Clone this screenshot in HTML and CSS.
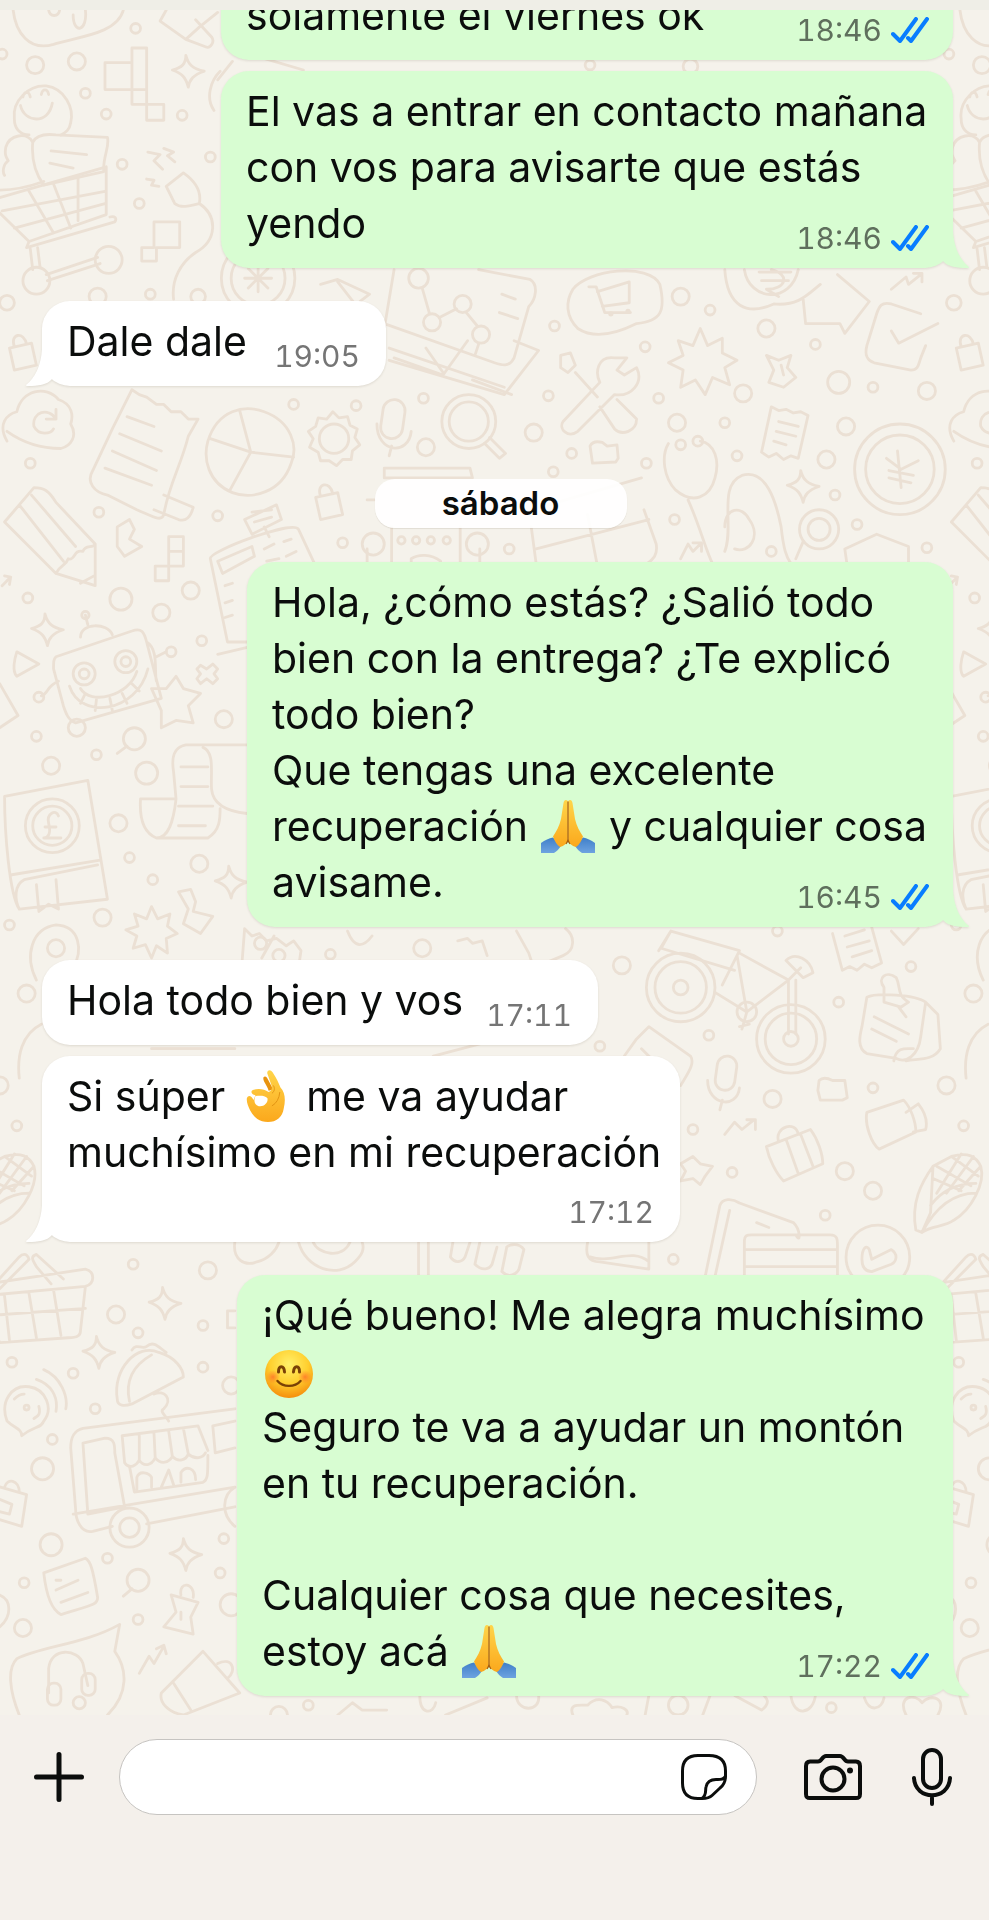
FILE: index.html
```html
<!DOCTYPE html>
<html lang="es">
<head>
<meta charset="utf-8">
<meta name="viewport" content="width=device-width, initial-scale=1">
<title>Chat</title>
<link rel="stylesheet" href="styles.css">
</head>
<body>
<svg class="defs" width="0" height="0" aria-hidden="true">
  <defs>
    <linearGradient id="skin" x1="0" y1="0" x2="0" y2="1"><stop offset="0" stop-color="#ffd54a"/><stop offset="1" stop-color="#fba81c"/></linearGradient>
    <linearGradient id="sleeve" x1="0" y1="0" x2="0" y2="1"><stop offset="0" stop-color="#3f7fc9"/><stop offset="1" stop-color="#6ea3e0"/></linearGradient>
    <radialGradient id="face" cx=".5" cy=".3" r=".72"><stop offset="0" stop-color="#fff06a"/><stop offset=".55" stop-color="#ffcf2e"/><stop offset="1" stop-color="#f58a0b"/></radialGradient>
    <radialGradient id="blush"><stop offset="0" stop-color="#ff6a2a" stop-opacity=".75"/><stop offset="1" stop-color="#ff7a2a" stop-opacity="0"/></radialGradient>
    <symbol id="pray" viewBox="0 0 54 54">
      <path d="M0 44C4 41 8 39.500 12 38.500L20 47C18 50 16 52 13 54H0ZM54 44C50 41 46 39.500 42 38.500L34 47C36 50 38 52 41 54H54Z" fill="url(#sleeve)"/>
      <path d="M26.800 2C25 0 23 1 22.500 4L20 20C18.500 27 15 33 12 37.500C13.500 42 16 46 19 48C23 47 26.800 44 26.800 40Z" fill="url(#skin)"/>
      <path d="M27.200 2C29 0 31 1 31.500 4L34 20C35.500 27 39 33 42 37.500C40.500 42 38 46 35 48C31 47 27.200 44 27.200 40Z" fill="url(#skin)"/>
      <path d="M27 2.500V41M25 45C26.500 43 27 42 27 40C27 42 27.500 43 29 45" fill="none" stroke="#a85d0c" stroke-width="1.200"/>
    </symbol>
    <symbol id="okhand" viewBox="36 26 124 164">
      <path d="M90 52C94 46 100 48 104 58L120 88L106 92C102 76 88 64 90 52Z" fill="#e8930f"/>
      <path fill-rule="evenodd" d="M102 40C100 28 112 26 118 36C130 54 136 68 142 82C156 96 158 120 152 145C148 172 130 187 104 187C78 187 62 174 50 152C44 140 38 126 40 114C44 104 54 106 60 120L66 106C54 104 50 94 58 90C74 84 92 86 106 96C116 92 118 84 114 74ZM66 108C60 120 62 136 76 139C94 142 106 126 102 114C94 106 80 106 66 108Z" fill="url(#skin)"/>
      <path d="M120 76C126 84 124 94 116 100M140 96C138 116 130 130 116 138" fill="none" stroke="#e29312" stroke-width="3"/>
    </symbol>
    <symbol id="smile" viewBox="0 0 48 48">
      <circle cx="24" cy="24" r="24" fill="url(#face)"/>
      <circle cx="8" cy="27" r="7" fill="url(#blush)"/><circle cx="40" cy="27" r="7" fill="url(#blush)"/>
      <path d="M13.500 22C13.500 15 19 15 19.500 22M28.500 22C29 15 34.500 15 34.500 22" fill="none" stroke="#7a4106" stroke-width="3" stroke-linecap="round"/>
      <path d="M12.500 31C18 37.500 30 37.500 35.500 31" fill="none" stroke="#7a4106" stroke-width="2.400" stroke-linecap="round"/>
    </symbol>
    <symbol id="ticks" viewBox="0 0 38 26">
      <path d="M2 17L9 24L25 2M17 21L20 24L36 2" fill="none" stroke="#087dff" stroke-width="4" stroke-linecap="round" stroke-linejoin="round"/>
    </symbol>
    <symbol id="tail" viewBox="0 0 26 38">
      <path d="M0 0H10C11 17 17 29 26 36C26 37 25 37 24 37C14 37 5 36 0 30Z"/>
    </symbol>
  </defs>
</svg>

<div class="screen">
  <div class="topbar"></div>
  <main class="chat">
    <svg class="wallpaper" viewBox="0 8 808 1392" preserveAspectRatio="xMidYMin slice" aria-hidden="true">
      <g id="tile">
        <g id="dots">
          <circle cx="29" cy="53" r="7"/><circle cx="63" cy="50" r="7"/><circle cx="111" cy="23" r="4"/><circle cx="2" cy="44" r="4"/><circle cx="70" cy="76" r="4"/><circle cx="87" cy="93" r="4"/><circle cx="149" cy="94" r="4"/><circle cx="172" cy="128" r="4"/><circle cx="100" cy="134" r="4"/><circle cx="114" cy="166" r="4"/><circle cx="6" cy="247" r="6"/><circle cx="80" cy="242" r="7"/><circle cx="123" cy="240" r="4"/><circle cx="162" cy="242" r="6"/>
          <circle cx="556" cy="242" r="7"/><circle cx="580" cy="253" r="4"/><circle cx="453" cy="266" r="4"/><circle cx="626" cy="268" r="7"/><circle cx="527" cy="283" r="4"/><circle cx="666" cy="281" r="4"/><circle cx="685" cy="312" r="9"/><circle cx="607" cy="321" r="7"/><circle cx="713" cy="316" r="4"/><circle cx="757" cy="319" r="7"/><circle cx="448" cy="323" r="4"/><circle cx="482" cy="53" r="4"/><circle cx="564" cy="54" r="6"/>
          <circle cx="25" cy="378" r="4"/><circle cx="240" cy="330" r="4"/><circle cx="291" cy="331" r="4"/><circle cx="346" cy="325" r="4"/><circle cx="348" cy="365" r="7"/><circle cx="436" cy="353" r="7"/><circle cx="538" cy="325" r="4"/><circle cx="553" cy="345" r="7"/><circle cx="592" cy="345" r="4"/><circle cx="691" cy="348" r="7"/><circle cx="467" cy="370" r="4"/><circle cx="452" cy="385" r="4"/><circle cx="528" cy="378" r="4"/><circle cx="602" cy="372" r="4"/><circle cx="675" cy="375" r="7"/><circle cx="682" cy="404" r="4"/><circle cx="81" cy="418" r="4"/><circle cx="178" cy="421" r="4"/><circle cx="280" cy="443" r="4"/><circle cx="416" cy="448" r="4"/><circle cx="551" cy="424" r="4"/><circle cx="630" cy="450" r="4"/><circle cx="757" cy="447" r="4"/><circle cx="700" cy="428" r="4"/>
          <circle cx="99" cy="489" r="9"/><circle cx="156" cy="482" r="7"/><circle cx="132" cy="500" r="7"/><circle cx="23" cy="488" r="4"/><circle cx="165" cy="523" r="4"/><circle cx="183" cy="587" r="7"/><circle cx="30" cy="601" r="4"/><circle cx="42" cy="625" r="7"/><circle cx="79" cy="616" r="4"/><circle cx="120" cy="631" r="9"/><circle cx="97" cy="672" r="7"/><circle cx="106" cy="700" r="4"/><circle cx="163" cy="705" r="7"/><circle cx="125" cy="718" r="4"/><circle cx="84" cy="749" r="7"/><circle cx="8" cy="755" r="4"/>
          <circle cx="345" cy="774" r="7"/><circle cx="270" cy="779" r="4"/><circle cx="508" cy="788" r="7"/><circle cx="22" cy="811" r="7"/><circle cx="635" cy="760" r="4"/><circle cx="744" cy="789" r="4"/><circle cx="685" cy="818" r="4"/><circle cx="579" cy="845" r="4"/><circle cx="490" cy="854" r="4"/><circle cx="713" cy="888" r="4"/><circle cx="0" cy="886" r="7"/><circle cx="631" cy="897" r="7"/><circle cx="566" cy="922" r="4"/><circle cx="14" cy="919" r="4"/><circle cx="598" cy="957" r="4"/><circle cx="690" cy="956" r="7"/><circle cx="713" cy="972" r="7"/><circle cx="674" cy="992" r="4"/><circle cx="550" cy="1028" r="4"/><circle cx="109" cy="1032" r="4"/><circle cx="170" cy="1037" r="7"/><circle cx="95" cy="1073" r="7"/><circle cx="113" cy="1088" r="4"/><circle cx="166" cy="1082" r="4"/><circle cx="10" cy="1112" r="4"/><circle cx="60" cy="1121" r="4"/><circle cx="166" cy="1116" r="4"/><circle cx="78" cy="1150" r="4"/><circle cx="189" cy="1131" r="7"/>
          <circle cx="43" cy="1175" r="4"/><circle cx="35" cy="1199" r="9"/><circle cx="42" cy="1261" r="9"/><circle cx="183" cy="1256" r="4"/><circle cx="88" cy="1272" r="4"/><circle cx="20" cy="1292" r="4"/><circle cx="180" cy="1284" r="4"/><circle cx="113" cy="1322" r="4"/><circle cx="19" cy="1329" r="7"/><circle cx="189" cy="1310" r="9"/><circle cx="252" cy="1392" r="4"/><circle cx="679" cy="1394" r="4"/>
        </g>
        <!-- mitten, brush, steps, stars -->
        <path d="M11 8C13 26 24 42 44 36C62 30 96 28 101 8M40 8C41 14 48 14 49 8M60 12C60 28 72 26 70 8"/>
        <path d="M136 8L131 17L152 32L163 22L178 10M152 32L168 38C172 40 176 34 173 30L160 16"/>
        <path d="M86 51H108V39H120V51V85H134V98H120V85H108V73H86ZM108 51V73H120"/>
        <path id="spark" d="M152 45C154 53 158 56 167 58C158 61 155 65 154 71C152 63 149 60 141 57C149 55 152 52 152 45Z"/>
        <!-- smiley, bag and shopping cart -->
        <path d="M12 97C10 82 24 69 38 70C53 72 61 88 58 100C57 106 54 108 50 110M12 97C12 104 16 110 24 110M17 86C20 100 40 102 43 84M19 79C20 74 24 74 25 79M34 77C35 72 39 72 40 77"/>
        <path d="M27 116C22 107 8 110 5 120C4 126 5 128 7 131C3 134 2 140 4 143M27 116C30 110 38 109 46 110L88 112C90 120 84 128 85 140L36 151C28 140 26 128 27 116ZM42 123L71 126M41 133L60 137M0 155C10 155 22 153 36 148"/>
        <path d="M-10 164L87 136V175L24 197ZM24 156L44 190M44 150L58 186M64 143V180M2 172L86 156M12 186L86 166M24 197L22 202L94 181C96 178 94 176 90 177M25 203L27 220M31 202L33 218M38 224L80 210M39 229L82 215"/>
        <circle cx="30" cy="229" r="11"/><circle cx="89" cy="212" r="11"/>
        <!-- plug and blocks -->
        <path d="M136 152L150 141C160 148 165 156 163 166C155 168 148 170 143 166ZM121 124L131 126L126 131L133 138M134 121L142 124L137 127L143 132M120 146L126 147L124 151L130 152M163 166C178 176 178 196 160 206C148 214 140 228 142 244"/>
        <path d="M126 181H147V202H128V213H116V202H126Z"/>
        <!-- flower medal -->
        <circle cx="211" cy="227" r="30"/><circle cx="211" cy="227" r="22"/><path d="M211 216V238M200 227H222M203 219L219 235M219 219L203 235M190 40L248 57M178 65L190 50M175 90C168 80 172 66 180 58"/>
        <!-- laptop with graph -->
        <path d="M262 232L276 228L302 240L294 246M276 230L290 248M322 220L314 268M391 220L433 228C440 232 438 244 432 250L420 292C416 300 410 298 404 296L314 264M322 292L362 306L382 278M440 286L412 322L318 294M440 286L420 278M318 284L412 316M410 240L421 244M408 255L423 260M348 284L362 304M345 235L351 256M359 259L373 252M381 255L390 266M391 281L388 290"/>
        <circle cx="342" cy="227" r="8"/><circle cx="378" cy="248" r="7"/><circle cx="353" cy="263" r="7"/><circle cx="393" cy="273" r="7"/>
        <!-- cart tag -->
        <path d="M468 236C480 220 530 214 539 232C544 254 540 262 520 264C500 274 484 276 472 268C462 258 462 246 468 236ZM481 234H487L494 255H515M488 238L514 230V247L492 250"/><circle cx="499" cy="256" r="1"/><circle cx="513" cy="254" r="1"/>
        <!-- coin, arrow, check, chart -->
        <path d="M592 220C594 250 610 258 632 248C652 250 660 240 670 232M608 220C612 246 646 248 652 220M620 222H646M622 229H644M630 220C646 224 642 236 626 236L636 242M684 224L710 246L690 272L686 264H658L656 244M728 236L740 226L742 232L752 224M746 223H753V230"/>
        <path d="M752 256L728 248C720 246 718 250 716 256L708 282C706 290 708 294 714 296L744 302C750 302 750 298 752 292L756 282M728 270L734 280L766 264"/>
        <!-- starbursts and tools -->
        <path d="M572 268L578 282L590 276L590 288L602 294L592 300L596 314L582 308L576 322L568 310L556 316L558 302L546 296L558 290L554 278L566 282Z"/>
        <path d="M626 290L636 294L646 290L643 300L650 308L640 316L628 312L632 302ZM638 298L640 306M458 290L466 288L470 298L464 304L458 300ZM470 304L488 324M502 292C488 290 486 304 490 312L460 344C456 350 464 358 472 352L502 322C516 324 526 312 520 300L510 306L504 302L512 292ZM490 332L502 350C508 356 520 352 520 342L504 326"/>
        <path id="lock" d="M8 284L26 280L30 298L12 302ZM12 283C8 272 20 270 22 281"/>
        <!-- cloud, receipt, pie, gear -->
        <path d="M6 360C-2 346 6 338 14 336C18 318 38 314 48 326C60 330 60 340 58 346C64 356 58 364 50 366C34 366 20 362 6 352M46 334V342H38M46 342C40 332 26 336 28 348C32 356 42 354 44 350"/>
        <path d="M108 318L114 322L120 324L128 330L134 330L140 336L148 336L154 342L162 342L154 356C148 380 138 396 134 420C132 426 126 422 112 416L88 404C78 402 70 394 76 384L92 350ZM134 404L158 414C156 422 152 426 146 424L126 416M104 340L126 348M98 354L132 368M92 368L128 384M86 382L124 396"/>
        <path d="M170 360C178 334 200 330 216 336C238 344 244 364 238 378C230 402 206 408 190 402C170 394 166 374 170 360ZM205 369L196 335M205 369L172 358M205 369L240 373M205 369L188 400"/>
        <path d="M272 336L277 341L284 340L286 347L292 350L290 357L294 363L288 368L287 375L280 375L275 380L269 376L262 376L260 369L253 365L256 358L252 352L258 348L260 341L267 342Z"/><circle cx="273" cy="358" r="12"/>
        <!-- mic, lens, folder -->
        <rect x="312" y="326" width="18" height="32" rx="9" transform="rotate(8 321 342)"/><path d="M308 346C308 370 334 372 336 352M320 364L318 372"/>
        <circle cx="383" cy="344" r="22"/><circle cx="383" cy="344" r="16"/><path d="M396 362L408 374L413 370L400 357M386 310L418 322M482 364C484 360 488 360 492 361L496 364L504 363L505 374L503 377L484 378Z"/>
        <!-- stethoscope, bill, yen coin -->
        <path d="M546 362C540 372 542 390 552 400C566 412 580 406 584 390C588 376 584 362 572 360M562 408C572 430 576 448 582 460M592 450C600 430 586 396 606 388C626 382 634 410 638 430C640 448 642 454 646 460M592 430C592 414 606 412 612 424C622 438 612 452 600 448"/><circle cx="556" cy="363" r="4"/><circle cx="570" cy="360" r="4"/>
        <path d="M630 332L636 335L642 334L648 337L654 336L660 339L652 374L646 372L640 375L634 370L628 373L622 369ZM636 344L652 348M634 352L650 356M632 360L642 363"/>
        <circle cx="735" cy="383" r="37"/><circle cx="735" cy="383" r="28"/><path d="M733 368L736 398M736 383L750 376M736 383L724 374M726 384L746 388M726 390L744 394"/>
        <use href="#spark" x="502" y="339"/>
        <circle cx="669" cy="432" r="16"/><circle cx="669" cy="432" r="9"/><path d="M656 442L650 456M692 462L690 448L716 436L742 446V462M556 456L562 444L566 450L572 444M566 443H573V450"/>
        <!-- pencil and blocks -->
        <path d="M4 426L28 398C36 398 40 400 46 410L78 444V478L46 468ZM16 412L52 458M26 404L62 446M46 468C50 460 54 462 56 456C62 458 60 448 68 450C70 444 76 448 78 444M66 476L77 470M2 478L9 471L4 470M9 471L8 477"/>
        <path d="M96 430L106 424L110 432L106 440L116 446L102 454L96 446ZM138 438H150V462H138ZM138 450H150M138 462V474H127V462Z"/>
        <use href="#lock" x="250" y="122"/>
        <!-- till -->
        <path d="M200 424L226 412L230 424L206 436ZM206 418L222 416M208 426L222 422M216 430L220 438M172 456C170 450 240 424 244 432L258 462M172 456L186 524H204M178 458L206 446L208 454L182 468ZM216 448L224 444M232 442L238 440M218 458L228 456M234 454L242 450M184 478L190 476M184 492L190 490M184 504L190 502M178 534L204 528"/>
        <!-- robot keypad and grid -->
        <path d="M314 382H384L386 390H314ZM300 408H306M320 430V462M376 430V462M300 448V462M392 448V462M336 462V456C342 452 352 452 360 458V462M434 430L438 460M480 420L488 462M526 416L536 444C538 456 530 458 526 462M434 416L524 390M438 448L530 424"/>
        <circle cx="305" cy="444" r="9"/><circle cx="390" cy="444" r="9"/><circle cx="328" cy="441" r="3"/><circle cx="340" cy="441" r="3"/><circle cx="352" cy="441" r="3"/><circle cx="365" cy="441" r="3"/>
        <!-- spark, play, cross, robot -->
        <use href="#spark" x="-115" y="456"/>
        <path d="M14 532L32 542L14 552C10 548 12 538 14 532ZM164 543L169 546L174 542L178 546L175 550L178 554L174 558L169 554L164 558L161 554L164 550L161 546Z"/>
        <path d="M66 520C66 508 88 508 92 518M72 510L70 502M46 536L108 515C116 512 118 516 120 524L132 570L62 590C56 588 54 582 52 576L44 546C44 540 44 538 46 536ZM120 524C130 530 126 548 128 556M128 536L136 532M48 556C38 560 40 566 34 568"/>
        <circle cx="70" cy="502" r="3"/><circle cx="140" cy="532" r="4"/><circle cx="32" cy="569" r="4"/><circle cx="69" cy="550" r="9"/><circle cx="103" cy="540" r="9"/><circle cx="69" cy="550" r="4"/><circle cx="103" cy="540" r="4"/>
        <path d="M57 560C66 588 112 582 121 546M66 562C74 576 106 568 112 548M66 574L70 566M78 580L79 571M92 580L90 570M104 574L100 566M114 564L108 558"/>
        <path d="M124 562L136 562L144 552L150 562L164 566L154 576L158 590L144 588L132 594L132 580ZM0 558L15 584L0 594"/>
        <circle cx="63" cy="594" r="7"/><circle cx="110" cy="603" r="9"/><path d="M104 609L96 615"/>
        <!-- scroll -->
        <path d="M202 608H152C142 610 140 618 142 630L144 652M166 610C176 614 172 632 173 644C174 656 184 662 202 664M144 652C142 670 138 684 128 684C118 680 114 668 115 652H144M128 684H170C180 678 180 668 180 660M148 626H170M148 642H170M146 658H174M146 674H168"/>
        <!-- banknote book, flags -->
        <path d="M4 650L72 637L88 734L16 742C8 730 4 680 4 650ZM10 714L82 702M16 742C12 734 12 722 20 718L80 706M30 722L32 744L40 738L48 742L46 718"/><circle cx="43" cy="674" r="22"/><circle cx="43" cy="674" r="16"/><path d="M48 666C46 660 38 664 40 672C42 680 40 684 36 684H50M37 675H46"/>
        <use href="#spark" x="35" y="662"/>
        <path d="M146 728L156 726L160 736L158 744L174 748L164 762L150 754L154 742Z"/>
        <path id="burst" d="M124 740L129 750L139 746L137 756L145 762L136 766L137 778L128 772L124 782L119 771L109 774L112 764L103 759L113 756L110 746L120 750Z"/>
        <path d="M30 800C20 780 26 758 46 755C66 756 68 776 60 790"/><circle cx="46" cy="774" r="7"/>
        <path d="M200 758L206 764L212 762L218 768L226 766L234 772L240 768L246 776L244 790M200 758L198 784M214 782L224 764M284 760C290 776 298 772 304 764M374 768L382 766L386 770L394 768L398 780M422 760L432 778L436 790L460 780C470 776 470 764 462 758"/><circle cx="213" cy="770" r="5"/><circle cx="228" cy="780" r="5"/>
        <!-- bicycle -->
        <circle cx="556" cy="806" r="28"/><circle cx="556" cy="806" r="21"/><circle cx="556" cy="806" r="6"/><circle cx="646" cy="848" r="28"/><circle cx="646" cy="848" r="21"/><circle cx="646" cy="848" r="6"/>
        <path d="M538 776L548 760L604 776L590 804M548 760L540 774L600 792M602 780L610 826L644 800L604 778M584 810L610 826L606 840M644 800V844M650 800V844M644 800L654 790M642 784C650 776 662 784 664 794L656 798ZM604 838L612 836"/><circle cx="610" cy="826" r="8"/>
        <!-- receipt, clip note -->
        <path d="M680 762L688 792L694 789L700 792L706 787L712 790L720 786L712 757M690 764L706 759M692 773L710 768M696 781L712 776M728 760L738 771L750 758"/>
        <path d="M708 814C716 810 748 812 756 818L752 846C750 862 740 868 732 864L708 860C700 856 702 846 704 838ZM756 818L766 828L768 856C762 866 750 864 740 866M714 830L742 844M712 840L732 850M730 866C732 854 740 856 746 856M722 806C716 798 724 792 732 798C736 806 732 812 742 818L736 822L722 818ZM734 822L740 830"/>
        <!-- mic, folder, camera, bag, star -->
        <path d="M520 848L530 838L564 862C568 868 562 876 556 886M520 848L510 862M524 856L534 866M124 856H192M16 880C14 862 18 844 34 836M354 862L392 852"/>
        <rect x="585" y="862" width="16" height="28" rx="8" transform="rotate(8 593 876)"/><path d="M578 882C578 902 602 906 604 888M590 898L588 906"/>
        <path d="M669 882C672 879 676 880 680 882L690 882L692 896L688 898H670L668 890ZM708 908L738 898C744 904 748 916 748 924L718 938C712 934 706 918 708 908ZM740 908L750 901C754 906 758 914 756 922L746 924M592 926L600 916L606 922L616 914M610 914H617V922"/>
        <path d="M626 936L662 922C668 930 672 942 672 950L640 964C634 958 628 946 626 936ZM636 932C632 920 650 914 652 926M642 930L652 958M654 926L664 952M566 944L572 950L582 952L576 960L572 967L566 962L556 964L560 956L556 950Z"/>
        <!-- corn -->
        <path d="M-25 1004C-29 982 -21 966 -11 952L4 944C18 940 24 944 28 952C32 966 20 988 6 996C-2 1002 -12 1000 -20 1006ZM-11 952L-13 990L-20 1006M-20 1006C-8 984 6 974 24 974M-13 984C-4 972 8 966 24 966M-11 962L12 972M-8 952L20 968M4 944L26 960M-8 974L12 942M0 974L22 944M10 972L28 952"/>
        <!-- phone and card, check, cup -->
        <path d="M576 1042L588 984C590 978 598 978 604 982L648 998C654 1004 654 1016 650 1008M584 1042L596 988M618 998L628 1002M608 1042V1014C608 1008 610 1008 614 1008H678C684 1008 684 1012 684 1016V1042M608 1020H684M608 1034H684M480 1014C478 1024 480 1030 490 1030L530 1036V1014M482 1026C500 1032 516 1018 530 1030"/>
        <circle cx="717" cy="1026" r="26"/><path d="M704 1028C704 1018 708 1016 710 1020L712 1028L728 1020C734 1024 732 1030 728 1032L712 1038C706 1038 704 1034 704 1028Z"/>
        <path d="M192 1014C190 1028 200 1034 210 1030C220 1028 226 1020 228 1014M244 1014C250 1036 276 1044 290 1030C296 1024 298 1020 296 1014M256 1014C260 1024 280 1028 286 1014M342 1014V1042M350 1014V1042M370 1014L368 1026C372 1032 378 1030 380 1026L384 1014M392 1014L388 1032C394 1038 400 1036 402 1032L406 1018M414 1018L410 1038C416 1044 422 1040 424 1036L428 1020C424 1014 416 1016 414 1018Z"/>
        <!-- basket -->
        <path d="M-10 1048L70 1036C78 1038 78 1048 70 1050L66 1086C66 1090 64 1092 56 1092L0 1096L-16 1058L70 1050M4 1058L8 1094M24 1056L30 1092M44 1053L50 1090M-10 1074L70 1068M0 1052L24 1028C22 1022 18 1024 16 1026L-4 1048M52 1044L30 1024C24 1026 28 1030 30 1034L42 1048"/>
        <use href="#spark" x="-19" y="1006"/><use href="#spark" x="-73" y="1046"/>
        <!-- taco -->
        <path d="M96 1142C92 1118 112 1096 130 1104C144 1108 150 1118 150 1124L108 1146C102 1148 96 1148 96 1142ZM106 1144C102 1126 110 1114 124 1106M108 1102C112 1096 116 1102 120 1099C126 1094 130 1100 136 1104M126 1138C134 1134 142 1142 134 1150C130 1152 136 1156 138 1160M192 1070H186V1084H192"/>
        <!-- voice wave -->
        <circle cx="22" cy="1149" r="2"/><path d="M6 1160C0 1144 10 1130 24 1132C38 1134 44 1150 36 1160C34 1166 28 1164 18 1172C18 1166 12 1166 6 1160ZM12 1142C16 1138 18 1138 20 1138M32 1148C34 1156 30 1156 28 1158M36 1118C50 1124 56 1140 54 1150M30 1126C42 1130 48 1140 46 1152"/>
        <!-- food truck -->
        <path d="M192 1150L68 1166C60 1168 58 1174 58 1182L62 1232C62 1240 66 1252 76 1250L92 1246M120 1244L192 1230M68 1178L86 1174C94 1174 94 1180 94 1186L102 1230L72 1236ZM100 1172L162 1164L170 1184M106 1197L110 1218L166 1210C170 1208 170 1204 170 1188M100 1172L102 1194C106 1200 112 1196 114 1192C118 1198 124 1196 127 1190C132 1196 138 1194 141 1189C146 1194 152 1192 154 1187C160 1192 166 1190 168 1186M114 1172V1192M126 1170L127 1190M138 1168L141 1189M150 1166L154 1187M192 1160L174 1164L176 1186L192 1182M60 1236L192 1214M112 1216V1206C114 1200 122 1202 124 1206V1214M132 1214L138 1200L142 1212M148 1210V1202C152 1196 160 1198 160 1208"/>
        <circle cx="106" cy="1247" r="16"/><circle cx="106" cy="1247" r="8"/><path d="M192 1214C182 1220 180 1236 192 1246"/>
        <path d="M-6 1212L22 1220L18 1246L-8 1238M4 1214C6 1206 16 1208 16 1218M0 1224L10 1228L8 1236L0 1234"/>
        <use href="#spark" x="-2" y="1211"/>
        <path d="M36 1284L70 1272C74 1274 76 1280 80 1304C80 1310 76 1310 50 1318C42 1314 38 1302 36 1284ZM46 1290H50M46 1298L64 1290M50 1308L72 1300"/>
        <circle cx="113" cy="1290" r="9"/><path d="M108 1297L101 1303M140 1302L162 1308L156 1320L158 1334L134 1328L144 1316ZM148 1302C146 1290 160 1292 158 1304M148 1316V1322M0 1302C10 1306 10 1320 0 1328"/>
        <!-- headset bubble, megaphone -->
        <path d="M16 1400C8 1380 6 1362 14 1354C34 1344 70 1342 98 1326L94 1348C104 1362 106 1382 88 1400M40 1382V1362C42 1344 64 1346 68 1358L72 1376"/><rect x="39" y="1374" width="11" height="18" rx="5"/><rect x="67" y="1366" width="11" height="18" rx="5"/><circle cx="65" cy="1390" r="5"/>
        <path d="M132 1382L166 1348L196 1382L150 1400C138 1398 130 1390 132 1382ZM142 1374L156 1396M178 1358C190 1352 194 1364 186 1370M114 1366L122 1352L126 1358L134 1344M128 1346L134 1343L136 1350"/>
        <path d="M276 1400L288 1390L296 1396H316M343 1384C343 1400 354 1400 356 1390M364 1400L398 1386M422 1384C422 1398 442 1398 440 1384M468 1400C464 1390 474 1392 480 1392C488 1384 496 1388 500 1394C508 1392 514 1396 512 1400M530 1384L527 1400M580 1384L574 1400M600 1384L622 1396C630 1390 626 1386 624 1384M646 1384C648 1402 664 1400 666 1384M706 1386C710 1398 720 1396 722 1386M740 1400C732 1384 748 1382 753 1390C760 1382 774 1386 766 1400"/><circle cx="554" cy="1392" r="8"/><circle cx="228" cy="1400" r="7"/>
      </g>
      <use href="#tile" x="773"/>
    </svg>

    <div class="row out joined">
      <div class="bubble w-wide">
        <p class="text">solamente el viernes ok</p>
        <span class="meta"><time>18:46</time><svg class="ticks" role="img" aria-label="Leído"><use href="#ticks"/></svg></span>
      </div>
    </div>
    <div class="row out joined">
      <div class="bubble w-wide">
        <p class="text">El vas a entrar en contacto mañana<br>con vos para avisarte que estás<br>yendo</p>
        <span class="meta"><time>18:46</time><svg class="ticks" role="img" aria-label="Leído"><use href="#ticks"/></svg></span>
        <svg class="tail" aria-hidden="true"><use href="#tail"/></svg>
      </div>
    </div>
    <div class="row in">
      <div class="bubble w-short">
        <p class="text">Dale dale</p>
        <span class="meta"><time>19:05</time></span>
        <svg class="tail" aria-hidden="true"><use href="#tail"/></svg>
      </div>
    </div>
    <div class="day"><span>sábado</span></div>
    <div class="row out">
      <div class="bubble w-large">
        <p class="text">Hola, ¿cómo estás? ¿Salió todo<br>bien con la entrega? ¿Te explicó<br>todo bien?<br>Que tengas una excelente<br>recuperación <svg class="emoji" role="img" aria-label="🙏"><use href="#pray"/></svg> y cualquier cosa<br>avisame.</p>
        <span class="meta"><time>16:45</time><svg class="ticks" role="img" aria-label="Leído"><use href="#ticks"/></svg></span>
        <svg class="tail" aria-hidden="true"><use href="#tail"/></svg>
      </div>
    </div>
    <div class="row in">
      <div class="bubble w-medium">
        <p class="text">Hola todo bien y vos</p>
        <span class="meta"><time>17:11</time></span>
      </div>
    </div>
    <div class="row in joined">
      <div class="bubble stacked w-text">
        <p class="text">Si súper <svg class="emoji" role="img" aria-label="👌"><use href="#okhand"/></svg> me va ayudar<br>muchísimo en mi recuperación</p>
        <span class="meta"><time>17:12</time></span>
        <svg class="tail" aria-hidden="true"><use href="#tail"/></svg>
      </div>
    </div>
    <div class="row out">
      <div class="bubble w-full">
        <p class="text">¡Qué bueno! Me alegra muchísimo<br><svg class="emoji round" role="img" aria-label="😊"><use href="#smile"/></svg><br>Seguro te va a ayudar un montón<br>en tu recuperación.<br><br>Cualquier cosa que necesites,<br>estoy acá <svg class="emoji" role="img" aria-label="🙏"><use href="#pray"/></svg></p>
        <span class="meta"><time>17:22</time><svg class="ticks" role="img" aria-label="Leído"><use href="#ticks"/></svg></span>
        <svg class="tail" aria-hidden="true"><use href="#tail"/></svg>
      </div>
    </div>
  </main>

  <form class="composer">
    <button type="button" class="icon" aria-label="Adjuntar"><svg width="50" height="50" viewBox="0 0 50 50"><path d="M25 2.500V47.500M2.500 25H47.500" stroke-width="5"/></svg></button>
    <div class="field">
      <input type="text" aria-label="Mensaje">
      <button type="button" class="icon" aria-label="Stickers"><svg width="46" height="46" viewBox="0 0 46 46"><path d="M21 44.500H17C6 44.500 1.500 39 1.500 29V17C1.500 6 7 1.500 17 1.500H28C39 1.500 44.500 7 44.500 17V22C44.500 28 43 31 39 34L31 41.500C29 43.500 27 44.500 21 44.500C26 41 24 37 25 33C26 28 30 25.500 35 25.500C39 25.500 43 26 44.500 22" stroke-width="3"/></svg></button>
    </div>
    <button type="button" class="icon" aria-label="Cámara"><svg width="58" height="46" viewBox="0 0 58 46"><path d="M6 7.500H14C18 7.500 18 2 22 2H36C40 2 40 7.500 44 7.500H52C55 7.500 56 9 56 12V40C56 43 55 44 52 44H6C3 44 2 43 2 40V12C2 9 3 7.500 6 7.500Z" stroke-width="4"/><circle cx="29" cy="25" r="11.500" stroke-width="4"/><circle cx="46" cy="16.500" r="3" class="solid"/></svg></button>
    <button type="button" class="icon" aria-label="Mensaje de voz"><svg width="40" height="58" viewBox="0 0 40 58"><rect x="11" y="2" width="18" height="38" rx="9" stroke-width="4"/><path d="M2 30C3 53 37 53 38 30M20 48V56" stroke-width="4"/></svg></button>
  </form>
</div>
</body>
</html>
```
FILE: styles.css
```css
* { box-sizing: border-box; }

body {
  margin: 0;
  background: #f4f0eb;
  color: #0b0d0c;
  font-family: Inter, "Liberation Sans", sans-serif;
}

.defs { position: absolute; }

.screen {
  display: flex;
  flex-direction: column;
  min-height: 100vh;
}

.topbar {
  position: relative;
  z-index: 1;
  height: 10px;
  background: #efeee7;
}

.chat {
  position: relative;
  z-index: 0;
  overflow: hidden;
  padding: 0 36px 19px 42px;
  background: #f5f2eb;
}

.wallpaper {
  position: absolute;
  inset: 0;
  z-index: -1;
  width: 100%;
  height: 100%;
  fill: none;
  stroke: #ebe0d4;
  stroke-width: 2.3;
  stroke-linecap: round;
  stroke-linejoin: round;
}

.row {
  display: flex;
  margin-top: 33px;
}
.row.joined { margin-top: 11px; }
.row.joined:nth-of-type(1) { margin-top: -35px; }
.row.out { justify-content: flex-end; }

.bubble {
  position: relative;
  display: grid;
  grid-template-columns: minmax(0, 1fr);
  max-width: 92%;
  padding: 12px 24px 17px 25px;
  border-radius: 28px;
  background: #fff;
  filter: drop-shadow(0 1px 1px rgba(60, 40, 20, 0.12));
}
.out .bubble { background: #d8fdd2; }

.w-wide { width: 732px; }
.w-full { width: 716px; }
.w-large { width: 706px; }
.w-text { width: 638px; }
.w-medium { width: 556px; }
.w-short { width: 344px; }

.text {
  grid-area: 1 / 1;
  margin: 0;
  font-size: 41px;
  line-height: 56px;
  white-space: nowrap;
}

.meta {
  grid-area: 1 / 1;
  align-self: end;
  justify-self: end;
  display: flex;
  align-items: center;
  gap: 9px;
  margin-bottom: -7px;
  color: #5f6f5d;
  font-size: 30px;
  font-variant-numeric: tabular-nums;
  line-height: 40px;
}
.in .meta { padding-right: 2px; color: #757575; }

.stacked { row-gap: 12px; }
.stacked .meta { grid-area: 2 / 1; }

.ticks { width: 38px; height: 26px; }

.emoji {
  width: 54px;
  height: 54px;
  margin: 0 2px;
  vertical-align: -12px;
}
.emoji.round { width: 50px; height: 48px; }

.tail {
  position: absolute;
  right: -16px;
  bottom: -1px;
  width: 26px;
  height: 38px;
  fill: #d8fdd2;
}
.in .tail {
  right: auto;
  left: -16px;
  fill: #fff;
  transform: scaleX(-1);
}

.day {
  display: flex;
  justify-content: center;
  margin: 93px -6px 0 0;
}
.day + .row { margin-top: 34px; }
.day span {
  width: 252px;
  border-radius: 20px;
  background: rgba(255, 255, 255, 0.92);
  box-shadow: 0 1px 1px rgba(60, 40, 20, 0.1);
  font-size: 33px;
  font-weight: 600;
  line-height: 49px;
  text-align: center;
}

.composer {
  display: flex;
  align-items: center;
  padding: 24px 37px 0 34px;
}

.field {
  flex: 1;
  display: flex;
  align-items: center;
  min-width: 0;
  height: 76px;
  margin: 0 47px 0 35px;
  padding: 0 29px 0 32px;
  border: 1px solid #c6c4c1;
  border-radius: 38px;
  background: #fff;
}

.field input {
  flex: 1;
  min-width: 0;
  height: 60px;
  padding: 0;
  border: 0;
  outline: 0;
  background: none;
  color: inherit;
  font: inherit;
  font-size: 41px;
}

.icon {
  display: flex;
  flex: none;
  padding: 0;
  border: 0;
  background: none;
  cursor: pointer;
}
.icon svg {
  fill: none;
  stroke: #0b0d0c;
  stroke-linecap: round;
  stroke-linejoin: round;
}
.icon .solid { fill: #0b0d0c; stroke: none; }
.icon + .icon { margin-left: 50px; }
```
